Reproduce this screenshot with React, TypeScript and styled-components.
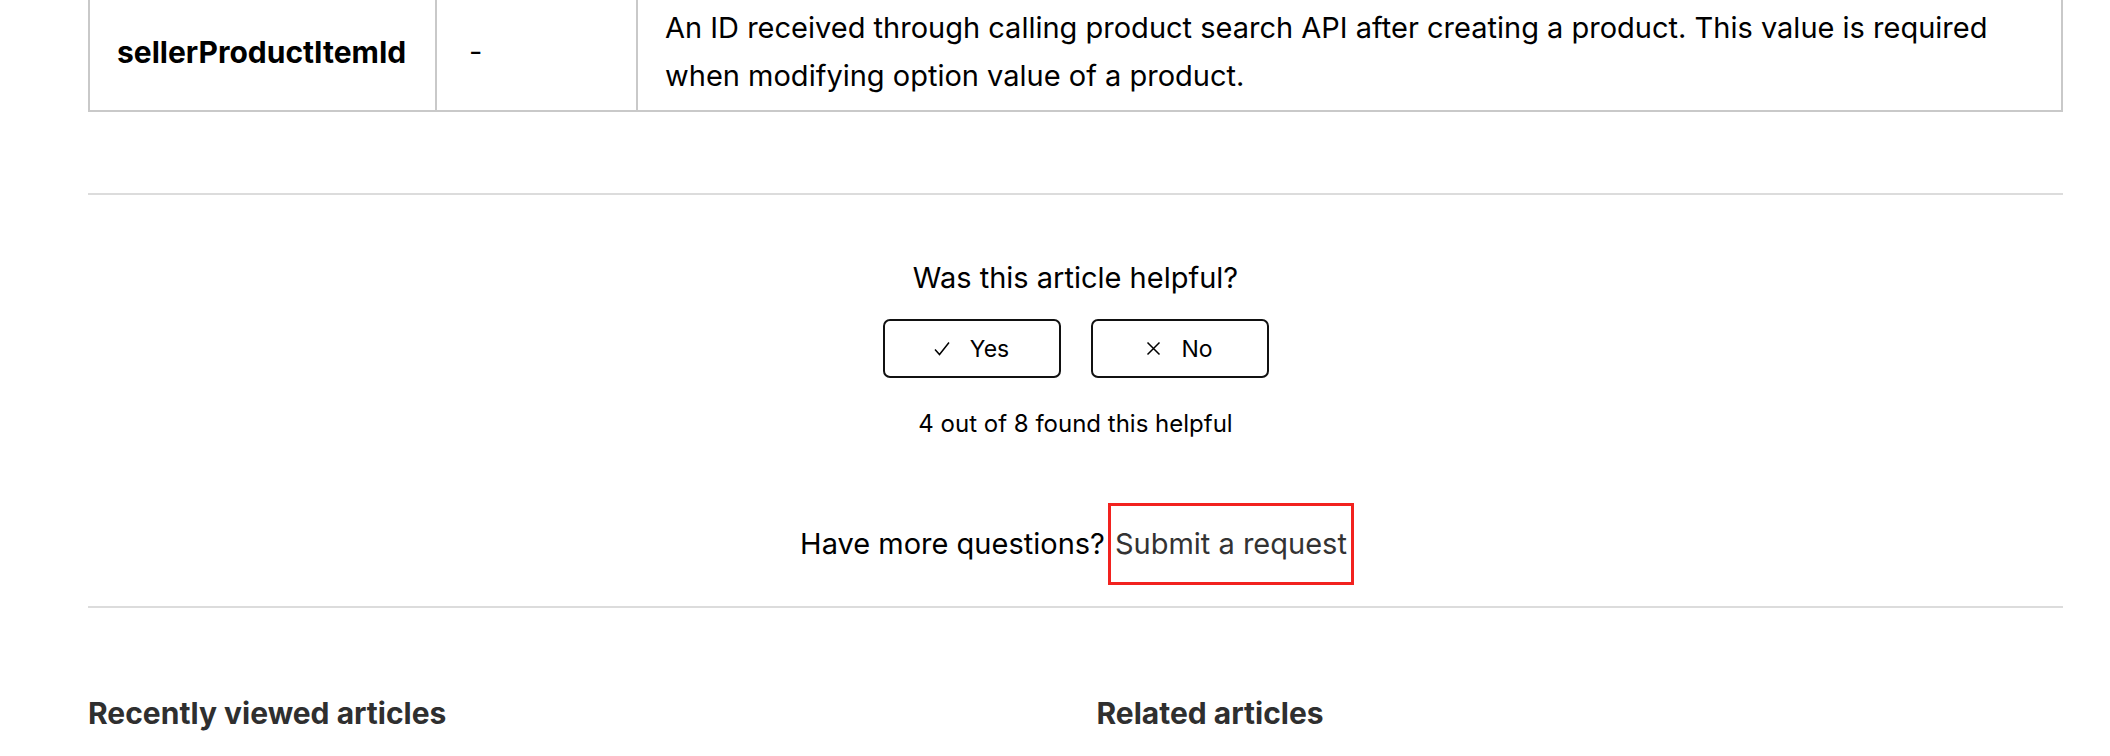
import React from 'react'
import styled, { createGlobalStyle } from 'styled-components'

const GlobalStyle = createGlobalStyle`
  html, body { margin: 0; padding: 0; background: #fff; }
  body { font-family: Inter, "Noto Sans", sans-serif; color: #000; }
`

const Page = styled.div`
  padding: 0 47px 0 88px;
  height: 756px;
  overflow: hidden;
`

const Table = styled.table`
  width: 100%;
  border-collapse: collapse;
  table-layout: fixed;
  margin-top: -8px;
`

const Cell = styled.td<{ $bold?: boolean; $inset?: number }>`
  border: 2px solid #c9c9c9;
  padding: 10px 27px 10px ${p => p.$inset ?? 27}px;
  font-size: ${p => (p.$bold ? 30 : 29)}px;
  line-height: 48px;
  font-weight: ${p => (p.$bold ? 700 : 400)};
  vertical-align: middle;
`

const Footer = styled.section`
  margin-top: 81px;
  border-top: 2px solid #dcdcdc;
  border-bottom: 2px solid #dcdcdc;
  text-align: center;
  padding: 63px 0 24px;
`

const Question = styled.h4`
  margin: 0;
  font-size: 29px;
  line-height: 40px;
  font-weight: 400;
`

const Votes = styled.div`
  display: flex;
  justify-content: center;
  gap: 30px;
  margin-top: 21px;
`

const VoteButton = styled.button`
  box-sizing: border-box;
  width: 178px;
  height: 59px;
  border: 2px solid #111;
  border-radius: 7px;
  background: #fff;
  color: #000;
  font-family: inherit;
  font-size: 23px;
  display: flex;
  align-items: center;
  justify-content: center;
  gap: 20px;
`

const Count = styled.div`
  margin-top: 31px;
  font-size: 24px;
  line-height: 30px;
`

const More = styled.div`
  margin-top: 67px;
  font-size: 29px;
`

const RequestLink = styled.a`
  display: inline-block;
  margin-left: 6px;
  padding: 0 4px;
  line-height: 76px;
  color: #333;
  text-decoration: none;
  outline: 3px solid #f2221f;
`

const Related = styled.div`
  display: grid;
  grid-template-columns: 1fr 1fr;
  gap: 42px;
  margin-top: 85px;
`

const Heading = styled.h3`
  margin: 0;
  font-size: 30px;
  line-height: 40px;
  font-weight: 700;
  color: #2f2f2f;
`

const Check = () => (
  <svg width="16" height="15" viewBox="0 0 16 15" fill="none" stroke="#000" strokeWidth="1.5">
    <path d="M1 8.5 L5.5 13.5 L15 1.5" />
  </svg>
)

const Cross = () => (
  <svg width="15" height="15" viewBox="0 0 15 15" fill="none" stroke="#000" strokeWidth="1.5">
    <path d="M1.5 1.5 L13.5 13.5 M13.5 1.5 L1.5 13.5" />
  </svg>
)

export default function App() {
  return (
    <>
      <GlobalStyle />
      <Page>
        <Table>
          <colgroup>
            <col style={{ width: 347 }} />
            <col style={{ width: 201 }} />
            <col />
          </colgroup>
          <tbody>
            <tr>
              <Cell $bold>sellerProductItemId</Cell>
              <Cell $inset={32}>-</Cell>
              <Cell>
                An ID received through calling product search API after creating a product. This value is required when modifying option value of a product.
              </Cell>
            </tr>
          </tbody>
        </Table>
        <Footer>
          <Question>Was this article helpful?</Question>
          <Votes>
            <VoteButton><Check />Yes</VoteButton>
            <VoteButton><Cross />No</VoteButton>
          </Votes>
          <Count>4 out of 8 found this helpful</Count>
          <More>
            Have more questions?
            <RequestLink href="#">Submit a request</RequestLink>
          </More>
        </Footer>
        <Related>
          <Heading>Recently viewed articles</Heading>
          <Heading>Related articles</Heading>
        </Related>
      </Page>
    </>
  )
}
